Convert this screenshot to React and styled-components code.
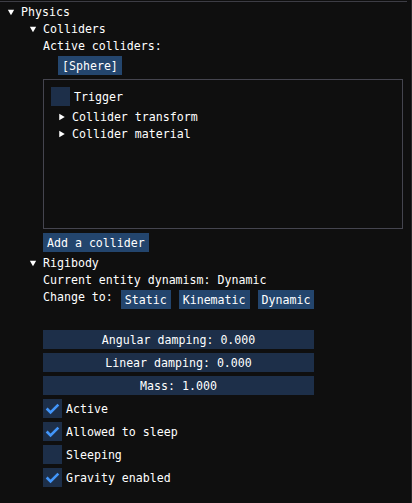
import React from "react";
import styled, { createGlobalStyle } from "styled-components";

const GlobalStyle = createGlobalStyle`
  html, body {
    margin: 0;
    padding: 0;
    background: #0f0f0f;
  }
`;

const Window = styled.div`
  box-sizing: border-box;
  width: 412px;
  height: 503px;
  background: #0f0f0f;
  border-right: 1px solid #2a2a2a;
  overflow: hidden;
  font-family: "DejaVu Sans Mono", "Liberation Mono", monospace;
  font-size: 11.6px;
  line-height: 15px;
  color: #ffffff;
`;

const TopRule = styled.div`
  width: 407px;
  height: 1px;
  margin-top: 1px;
  background: #3d3d45;
`;

const Stack = styled.div`
  display: flex;
  flex-direction: column;
  align-items: flex-start;
  gap: 4px;
  padding: ${({ $pad }) => $pad || "0"};
`;

const TreeRow = styled.div`
  display: flex;
  align-items: flex-start;
  height: 13px;
  margin-left: ${({ $at }) => $at}px;
  white-space: pre;
`;

const Label = styled.div`
  height: 13px;
  margin-left: ${({ $at }) => $at || 0}px;
  white-space: pre;
`;

const Button = styled.div`
  height: 19px;
  line-height: 21px;
  padding: 0 4px;
  background: ${({ $selectable }) => ($selectable ? "#24466e" : "#23456d")};
  margin-left: ${({ $at }) => $at || 0}px;
  white-space: pre;
  overflow: hidden;
`;

const ButtonRow = styled.div`
  display: flex;
  align-items: flex-start;
  gap: 8px;
  margin-left: 43px;
`;

const Child = styled.div`
  box-sizing: border-box;
  width: 360px;
  height: 150px;
  margin-left: 43px;
  border: 1px solid #45454f;
`;

const CheckRow = styled.div`
  display: flex;
  align-items: flex-start;
  gap: 4px;
  height: 19px;
  line-height: 21px;
  margin-left: ${({ $at }) => $at || 0}px;
  white-space: pre;
`;

const Box = styled.div`
  width: 19px;
  height: 19px;
  background: #1d2f49;
  flex: none;
  svg {
    display: block;
  }
`;

const Slider = styled.div`
  width: 271px;
  height: 19px;
  line-height: 21px;
  margin-left: 43px;
  background: #1d2f49;
  text-align: center;
  white-space: pre;
  overflow: hidden;
`;

const Spacer = styled.div`
  height: 13px;
`;

const Arrow = ({ open }) => (
  <svg width="21" height="13" viewBox="0 0 21 13" style={{ flex: "none" }}>
    {open ? (
      <polygon points="7.85,4.77 14.15,4.77 11,10.23" fill="#ffffff" />
    ) : (
      <polygon points="13.73,7 8.27,10.15 8.27,3.85" fill="#ffffff" />
    )}
  </svg>
);

const Checkbox = ({ checked, label, at }) => (
  <CheckRow $at={at}>
    <Box>
      {checked && (
        <svg width="19" height="19" viewBox="0 0 19 19">
          <polyline
            points="3.65,9.5 7.55,13.4 15.35,5.6"
            fill="none"
            stroke="#4296fa"
            strokeWidth="2.6"
          />
        </svg>
      )}
    </Box>
    <span>{label}</span>
  </CheckRow>
);

const Tree = ({ open, label, at }) => (
  <TreeRow $at={at}>
    <Arrow open={open} />
    <span>{label}</span>
  </TreeRow>
);

export default function App() {
  return (
    <>
      <GlobalStyle />
      <Window>
        <TopRule />
        <Stack $pad="3px 0 0 0">
          <Tree open label="Physics" at={0} />
          <Tree open label="Colliders" at={22} />
          <Label $at={43}>Active colliders:</Label>
          <Button $selectable $at={58}>[Sphere]</Button>
          <Child>
            <Stack $pad="7px 7px">
              <Checkbox label="Trigger" />
              <Tree label="Collider transform" at={0} />
              <Tree label="Collider material" at={0} />
            </Stack>
          </Child>
          <Button $at={43}>Add a collider</Button>
          <Tree open label="Rigibody" at={22} />
          <Label $at={43}>Current entity dynamism: Dynamic</Label>
          <ButtonRow>
            <Label>Change to:</Label>
            <Button>Static</Button>
            <Button>Kinematic</Button>
            <Button>Dynamic</Button>
          </ButtonRow>
          <Spacer />
          <Slider>Angular damping: 0.000</Slider>
          <Slider>Linear damping: 0.000</Slider>
          <Slider>Mass: 1.000</Slider>
          <Checkbox checked label="Active" at={43} />
          <Checkbox checked label="Allowed to sleep" at={43} />
          <Checkbox label="Sleeping" at={43} />
          <Checkbox checked label="Gravity enabled" at={43} />
        </Stack>
      </Window>
    </>
  );
}
